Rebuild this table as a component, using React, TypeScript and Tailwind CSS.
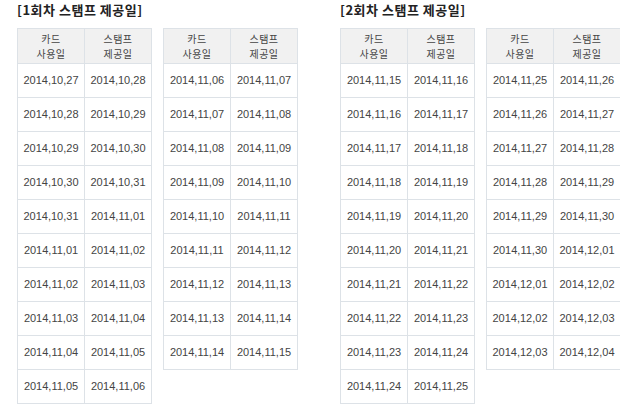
import React from 'react';

type Row = [string, string];

const d = (m: number, day: number) =>
  `2014,${String(m).padStart(2, '0')},${String(day).padStart(2, '0')}`;

// build consecutive date pairs starting from a given day
const buildRows = (start: [number, number], count: number): Row[] => {
  const rows: Row[] = [];
  let [m, day] = start;
  const next = (mm: number, dd: number): [number, number] => {
    const last = mm === 11 ? 30 : 31;
    return dd >= last ? [mm + 1, 1] : [mm, dd + 1];
  };
  for (let i = 0; i < count; i++) {
    const [nm, nd] = next(m, day);
    rows.push([d(m, day), d(nm, nd)]);
    [m, day] = [nm, nd];
  }
  return rows;
};

const GROUPS = [
  { title: '[1회차 스탬프 제공일]', tables: [buildRows([10, 27], 10), buildRows([11, 6], 9)] },
  { title: '[2회차 스탬프 제공일]', tables: [buildRows([11, 15], 10), buildRows([11, 25], 9)] },
];

const headCell =
  "h-[35px] flex flex-col items-center justify-center border-r border-b border-[#dde2e7] bg-[#f1f1f1] text-[10px] leading-[15px] tracking-[0.5px] text-[#444] [font-family:'Noto_Sans_CJK_KR',sans-serif]";
const bodyCell =
  "h-[34px] flex items-center justify-center border-r border-b border-[#dde2e7] text-[11px] text-[#444] [font-family:'Liberation_Sans',Arial,sans-serif]";

function StampTable({ rows }: { rows: Row[] }) {
  return (
    <div className="w-[135px] grid grid-cols-[67px_67px] border-l border-t border-[#dde2e7]">
      <div className={headCell}>
        <span>카드</span>
        <span>사용일</span>
      </div>
      <div className={headCell}>
        <span>스탬프</span>
        <span>제공일</span>
      </div>
      {rows.map(([a, b]) => (
        <React.Fragment key={a}>
          <div className={bodyCell}>{a}</div>
          <div className={bodyCell}>{b}</div>
        </React.Fragment>
      ))}
    </div>
  );
}

export default function App() {
  return (
    <div className="w-[620px] h-[404px] bg-white overflow-hidden flex gap-[42px] pl-[17px] pt-[3px]">
      {GROUPS.map(g => (
        <div key={g.title} className="flex flex-col">
          <h2 className="h-[25px] text-[13px] leading-[14px] font-bold text-[#222] tracking-[0.5px] [font-family:'Noto_Sans_CJK_KR',sans-serif]">
            {g.title}
          </h2>
          <div className="flex items-start gap-[11px]">
            {g.tables.map((rows, i) => (
              <StampTable key={i} rows={rows} />
            ))}
          </div>
        </div>
      ))}
    </div>
  );
}
